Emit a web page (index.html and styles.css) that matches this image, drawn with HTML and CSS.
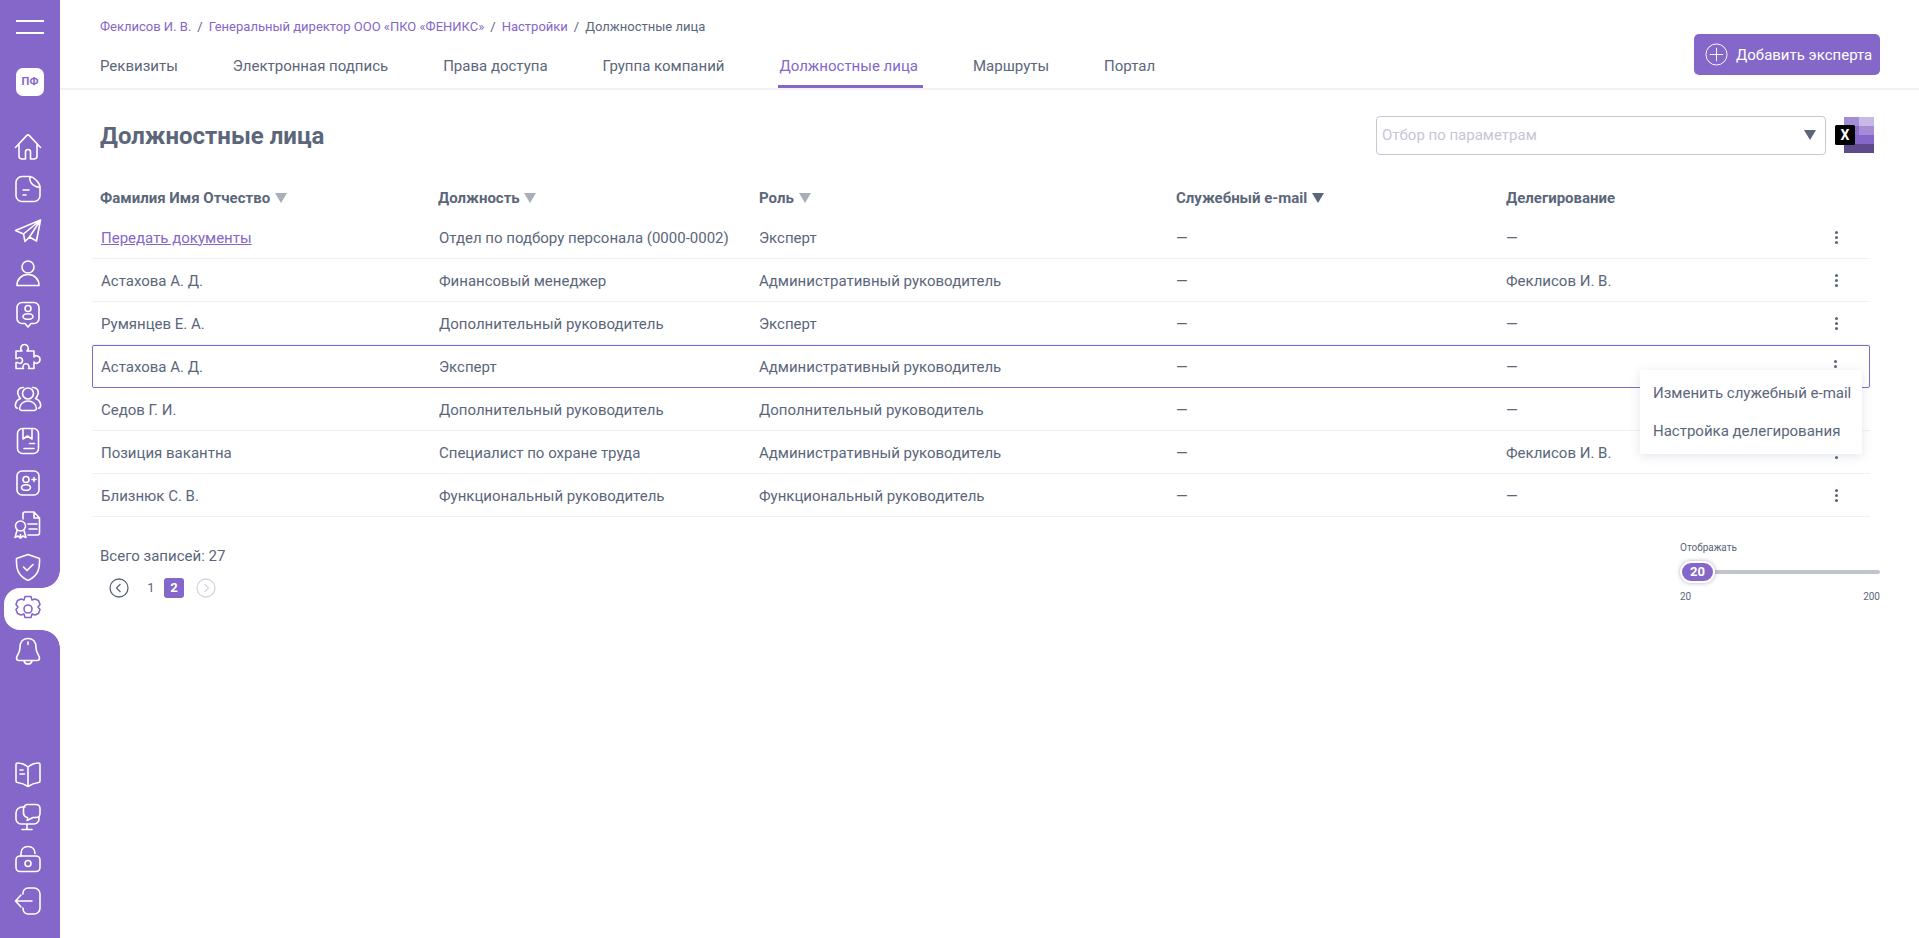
FILE: index.html
```html
<!DOCTYPE html>
<html lang="ru">
<head>
    <meta charset="UTF-8">
    <title>Должностные лица</title>
    <link rel="stylesheet" href="styles.css">
</head>
<body>
    <aside class="sidebar">
        <div class="burger"><span></span><span></span></div>
        <div class="logo">ПФ</div>
        <nav class="nav">
            <a class="nav-item"><svg viewBox="0 0 28 28"><path d="M1.500 14.500 12.600 2.600a2 2 0 0 1 2.800 0L26.500 14.500M5 11.500V23a3 3 0 0 0 3 3h3.500v-7a2.500 2.500 0 0 1 5 0v7H20a3 3 0 0 0 3-3V11.500"/></svg></a>
            <a class="nav-item"><svg viewBox="0 0 28 28"><path d="M16 1.500H8a6 6 0 0 0-6 6v13a6 6 0 0 0 6 6h12a6 6 0 0 0 6-6v-8.500C26 8 20 2 16 1.500c-1 4 1 9.500 10 11M9 15h6M9 20h3"/></svg></a>
            <a class="nav-item"><svg viewBox="0 0 28 28"><path d="M26.500 3 1.500 13.500l8 3.500L26.500 3l-4 21-7-4-4.500 4.500-1.500-7.500M15.500 20 26.500 3"/></svg></a>
            <a class="nav-item"><svg viewBox="0 0 28 28"><circle cx="14" cy="8" r="6"/><path d="M3 26.500c0-6.500 4.500-11 11-11s11 4.500 11 11z"/></svg></a>
            <a class="nav-item"><svg viewBox="0 0 28 28"><path d="M8 1.500h12a5 5 0 0 1 5 5v11a5 5 0 0 1-5 5h-3l-3 3.500-3-3.500H8a5 5 0 0 1-5-5v-11a5 5 0 0 1 5-5z"/><circle cx="14" cy="7.500" r="3"/><ellipse cx="14" cy="15.500" rx="5" ry="2.800"/></svg></a>
            <a class="nav-item"><svg viewBox="0 0 28 28"><path d="M2 8h6c-1.500-1-1.500-2.500-1-4 .5-1.500 2-2.500 3.500-2.500s3 1 3.500 2.500c.5 1.500.5 3-1 4h7v6c1-1.500 2.500-1.500 3.500-1 1.500.5 2.500 2 2.500 3.500s-1 3-2.500 3.500c-1 .5-2.500.5-3.500-1v6.500h-5.500c1-1 .8-2 .3-3-.5-1-1.600-1.700-2.800-1.700s-2.300.7-2.800 1.700c-.5 1-.7 2 .3 3H2v-6h1.500c1.200 1 2.600 1.200 3.700.5 1-.6 1.300-1.600 1.300-2.500s-.3-1.900-1.300-2.500c-1.100-.7-2.500-.5-3.700.5H2z"/></svg></a>
            <a class="nav-item"><svg viewBox="0 0 28 28"><circle cx="14" cy="8.500" r="5.500"/><path d="M8 25.500c-1.500 0-2.500-1-2.300-2.500.4-4 3.800-7 8.300-7s7.900 3 8.300 7c.2 1.500-.8 2.500-2.300 2.500zM9.500 2.500C5.500 2 3 5.500 4 9c.5 2 1.500 3.500 2.500 4.500C3 15 1 18 1.500 21.500c.2 1 1 1.800 2 1.800M18.500 2.500c4-.5 6.500 3 5.500 6.500-.5 2-1.500 3.500-2.500 4.500 3.500 1.500 5.500 4.500 5 8-.2 1-1 1.800-2 1.800"/></svg></a>
            <a class="nav-item"><svg viewBox="0 0 28 28"><rect x="3.500" y="1.500" width="21" height="25" rx="5"/><path d="M9 2v10l4.500-3 4.500 3V2M15.500 16.500h5M10 21.500h10"/></svg></a>
            <a class="nav-item"><svg viewBox="0 0 28 28"><rect x="3" y="2" width="22" height="24" rx="5"/><circle cx="12" cy="10.500" r="3"/><ellipse cx="12" cy="18.500" rx="4.500" ry="2.800"/><path d="M18 10.500h4M20 8.500v4"/></svg></a>
            <a class="nav-item"><svg viewBox="0 0 28 28"><path d="M9 8V3a2 2 0 0 1 2-2h9l5.500 6v15a2 2 0 0 1-2 2H14M20 1.500v5.500h5.500M14 13h9M15 18h8"/><circle cx="6.500" cy="15" r="5"/><path d="m3 19.500-2 7 3-1.500 2 2 .5-3.500.5 3.500 2-2 3 1.500-2-7"/></svg></a>
            <a class="nav-item"><svg viewBox="0 0 28 28"><path d="M14 1.500 2.500 5.500c-.5 10 1 17 11.500 22 10.500-5 12-12 11.500-22zM9.500 14l3.500 3.500 6-6"/></svg></a>
            <a class="nav-item active"><svg viewBox="0 0 28 28"><circle cx="14" cy="14" r="4"/><path d="M11 1.500h6l1 3.500 3-1 3.500 1.500 1.500 4-2 2.500 2 2.500-1.500 4-3.500 1.500-3-1-1 3.500h-6l-1-3.500-3 1-3.500-1.500-1.500-4 2-2.500-2-2.500 1.500-4L7 4l3 1z"/></svg></a>
            <a class="nav-item"><svg viewBox="0 0 28 28"><path d="M14 1.500c-5.500 0-8 4-8 9 0 6-3.500 8-3.500 10.500 0 1.500 1 2.500 2.500 2.500h18c1.500 0 2.500-1 2.500-2.500 0-2.500-3.500-4.500-3.500-10.500 0-5-2.500-9-8-9zM10 24c.5 2 2 3 4 3s3.500-1 4-3M14 5v2.500"/></svg></a>
        </nav>
        <nav class="nav-bottom">
            <a class="nav-item"><svg viewBox="0 0 28 28"><path d="M14 6C11 3.500 7 2 3.500 2 2.500 2 2 2.500 2 3.500V20c0 1 .5 1.500 1.500 1.500 3.500.5 7.500 2 10.500 4 3-2 7-3.500 10.500-4 1 0 1.500-.5 1.500-1.500V3.500C26 2.500 25.500 2 24.500 2 21 2 17 3.500 14 6zM14 6v19.500M6 9h3M6 13h4.500"/></svg></a>
            <a class="nav-item"><svg viewBox="0 0 28 28"><path d="M11 4H8a6 6 0 0 0-6 6v6a5 5 0 0 0 5 5h13a5 5 0 0 0 5-5v-2M13 21v5M8 26.500h10"/><path d="M14 1.500h8a4 4 0 0 1 4 4v5a4 4 0 0 1-4 4h-3l-6 3c1-1 .5-2 .5-3a5 5 0 0 1-4-4V5.500a4 4 0 0 1 4.500-4z"/></svg></a>
            <a class="nav-item"><svg viewBox="0 0 28 28"><rect x="2" y="11" width="24" height="15.500" rx="4"/><circle cx="14" cy="18.500" r="3"/><path d="M7 11V8.500C7 4 10 1.500 14 1.500s7 2.500 7 7"/></svg></a>
            <a class="nav-item"><svg viewBox="0 0 28 28"><path d="M9 7V6a5 5 0 0 1 5-5h6a6 6 0 0 1 6 6v14a6 6 0 0 1-6 6h-6a5 5 0 0 1-5-5v-1M18 14H1.500M7 8l-5.500 6L7 20"/></svg></a>
        </nav>
    </aside>

    <main class="main">
        <header class="topbar">
            <div class="topbar-left">
                <div class="crumbs">
                    <a>Феклисов И. В.</a><span>/</span><a>Генеральный директор ООО «ПКО «ФЕНИКС»</a><span>/</span><a>Настройки</a><span>/</span><b>Должностные лица</b>
                </div>
                <div class="tabs">
                    <a class="tab">Реквизиты</a>
                    <a class="tab">Электронная подпись</a>
                    <a class="tab">Права доступа</a>
                    <a class="tab">Группа компаний</a>
                    <a class="tab active">Должностные лица</a>
                    <a class="tab">Маршруты</a>
                    <a class="tab">Портал</a>
                </div>
            </div>
            <button class="add-button">
                <svg viewBox="0 0 24 24"><circle cx="12" cy="12" r="11"/><path d="M12 5v14M5 12h14"/></svg>
                Добавить эксперта
            </button>
        </header>

        <section class="content">
            <div class="title-row">
                <h1>Должностные лица</h1>
                <div class="filter">
                    <span>Отбор по параметрам</span>
                    <i class="arrow"></i>
                </div>
                <svg class="excel" viewBox="0 0 39 37">
                    <rect x="9" y="0" width="15" height="9" fill="#a58cd6"/>
                    <rect x="24" y="0" width="15" height="9" fill="#c8b9e6"/>
                    <rect x="9" y="9" width="15" height="9" fill="#8a6fca"/>
                    <rect x="24" y="9" width="15" height="9" fill="#a58cd6"/>
                    <rect x="9" y="18" width="30" height="9" fill="#8467c8"/>
                    <rect x="9" y="27" width="30" height="9" fill="#5f4a8e"/>
                    <rect x="0" y="8" width="20" height="20" rx="1.500" fill="#000"/>
                    <text x="10" y="23" text-anchor="middle" class="excel-x">X</text>
                </svg>
            </div>

            <div class="table">
                <div class="row head">
                    <div>Фамилия Имя Отчество <i class="sort"></i></div>
                    <div>Должность <i class="sort"></i></div>
                    <div>Роль <i class="sort"></i></div>
                    <div>Служебный e-mail <i class="sort on"></i></div>
                    <div>Делегирование</div>
                    <div></div>
                </div>
                <div class="row">
                    <div><a class="link">Передать документы</a></div>
                    <div>Отдел по подбору персонала (0000-0002)</div>
                    <div>Эксперт</div>
                    <div>—</div>
                    <div>—</div>
                    <div class="kebab"><i></i></div>
                </div>
                <div class="row">
                    <div>Астахова А. Д.</div>
                    <div>Финансовый менеджер</div>
                    <div>Административный руководитель</div>
                    <div>—</div>
                    <div>Феклисов И. В.</div>
                    <div class="kebab"><i></i></div>
                </div>
                <div class="row">
                    <div>Румянцев Е. А.</div>
                    <div>Дополнительный руководитель</div>
                    <div>Эксперт</div>
                    <div>—</div>
                    <div>—</div>
                    <div class="kebab"><i></i></div>
                </div>
                <div class="row selected">
                    <div>Астахова А. Д.</div>
                    <div>Эксперт</div>
                    <div>Административный руководитель</div>
                    <div>—</div>
                    <div>—</div>
                    <div class="kebab"><i></i></div>
                    <ul class="menu">
                        <li>Изменить служебный e-mail</li>
                        <li>Настройка делегирования</li>
                    </ul>
                </div>
                <div class="row">
                    <div>Седов Г. И.</div>
                    <div>Дополнительный руководитель</div>
                    <div>Дополнительный руководитель</div>
                    <div>—</div>
                    <div>—</div>
                    <div class="kebab"><i></i></div>
                </div>
                <div class="row">
                    <div>Позиция вакантна</div>
                    <div>Специалист по охране труда</div>
                    <div>Административный руководитель</div>
                    <div>—</div>
                    <div>Феклисов И. В.</div>
                    <div class="kebab"><i></i></div>
                </div>
                <div class="row">
                    <div>Близнюк С. В.</div>
                    <div>Функциональный руководитель</div>
                    <div>Функциональный руководитель</div>
                    <div>—</div>
                    <div>—</div>
                    <div class="kebab"><i></i></div>
                </div>
            </div>

            <div class="footer">
                <div class="paging">
                    <div class="total">Всего записей: 27</div>
                    <div class="pager">
                        <svg class="pg" viewBox="0 0 20 20"><circle cx="10" cy="10" r="9"/><path d="M11.500 6 7.500 10l4 4"/></svg>
                        <span class="page">1</span>
                        <span class="page current">2</span>
                        <svg class="pg off" viewBox="0 0 20 20"><circle cx="10" cy="10" r="9"/><path d="M8.500 6l4 4-4 4"/></svg>
                    </div>
                </div>
                <div class="slider">
                    <div class="slider-label">Отображать</div>
                    <div class="track"><span class="thumb">20</span></div>
                    <div class="slider-range"><span>20</span><span>200</span></div>
                </div>
            </div>
        </section>
    </main>
</body>
</html>
```
FILE: styles.css
```css
* {
    box-sizing: border-box;
}
body {
    margin: 0;
    height: 938px;
    display: flex;
    font-family: Roboto, "Noto Sans", sans-serif;
    font-size: 15px;
    color: #5b667b;
    background: #fff;
    overflow: hidden;
}
a {
    color: inherit;
    text-decoration: none;
}

/* sidebar */
.sidebar {
    width: 60px;
    flex-shrink: 0;
    background: #8467c8;
    display: flex;
    flex-direction: column;
}
.burger {
    width: 28px;
    margin: 20px 0 0 16px;
}
.burger span {
    display: block;
    height: 2px;
    margin-bottom: 10px;
    background: #fff;
}
.logo {
    width: 28px;
    height: 28px;
    margin: 24px 0 0 16px;
    border-radius: 7px;
    background: #fff;
    color: #8467c8;
    font-size: 11px;
    font-weight: 700;
    line-height: 28px;
    text-align: center;
}
.nav {
    margin-top: 30px;
    flex: 1;
}
.nav-bottom {
    padding-bottom: 16px;
}
.nav-item {
    display: flex;
    align-items: center;
    justify-content: center;
    height: 42px;
    padding-right: 4px;
    position: relative;
}
.nav-item svg {
    width: 28px;
    height: 28px;
    fill: none;
    stroke: #fff;
    stroke-width: 1.600;
    stroke-linecap: round;
    stroke-linejoin: round;
}
.nav-item.active {
    margin-left: 4px;
    padding-right: 8px;
    background: #fff;
    border-radius: 16px 0 0 16px;
}
.nav-item.active svg {
    stroke: #8467c8;
}
.nav-item.active::before,
.nav-item.active::after {
    content: "";
    position: absolute;
    right: 0;
    width: 18px;
    height: 18px;
    background: radial-gradient(circle at 0 0, #8467c8 17.500px, #fff 18px);
}
.nav-item.active::before {
    top: -18px;
}
.nav-item.active::after {
    bottom: -18px;
    background: radial-gradient(circle at 0 100%, #8467c8 17.500px, #fff 18px);
}

/* top */
.main {
    flex: 1;
    min-width: 0;
}
.topbar {
    height: 90px;
    padding: 0 39px 0 40px;
    border-bottom: 2px solid #f1f1f6;
    display: flex;
    justify-content: space-between;
}
.crumbs {
    padding-top: 19px;
    height: 56px;
    font-size: 13px;
    line-height: 15px;
    color: #8467c8;
}
.crumbs span {
    margin: 0 6px;
    color: #5b667b;
}
.crumbs b {
    font-weight: 400;
    color: #5b667b;
}
.tabs {
    display: flex;
    gap: 55px;
}
.tab {
    height: 32px;
    line-height: 20px;
}
.tab.active {
    margin: 0 -5px 0 -1px;
    padding: 0 5px 0 1px;
    color: #8467c8;
    border-bottom: 3px solid #8467c8;
}
.add-button {
    width: 186px;
    height: 41px;
    margin-top: 34px;
    padding: 0 0 0 11px;
    border: none;
    border-radius: 5px;
    background: #8467c8;
    color: #fff;
    font: 15px Roboto, sans-serif;
    display: flex;
    align-items: center;
    gap: 8px;
}
.add-button svg {
    width: 23px;
    height: 23px;
    fill: none;
    stroke: #fff;
    stroke-width: 1;
}

/* title + filter */
.content {
    padding: 0 49px 0 32px;
}
.title-row {
    display: flex;
    align-items: center;
    height: 80px;
    padding-left: 8px;
    padding-top: 10px;
}
h1 {
    margin: 0 auto 0 0;
    padding-top: 2px;
    font-size: 24px;
    font-weight: 700;
}
.filter {
    width: 450px;
    height: 39px;
    padding: 0 5px;
    border: 1px solid #c6c9d3;
    border-radius: 4px;
    display: flex;
    align-items: center;
    justify-content: space-between;
    color: #c6c6d6;
}
.arrow {
    width: 0;
    height: 0;
    margin-right: 4px;
    border-left: 6px solid transparent;
    border-right: 6px solid transparent;
    border-top: 10px solid #5b667b;
}
.excel {
    width: 39px;
    height: 37px;
    margin: 0 -4px 0 9px;
}
.excel-x {
    fill: #fff;
    font-size: 14px;
    font-weight: 700;
}

/* table */
.table {
    margin-top: 8px;
}
.row {
    display: grid;
    grid-template-columns: 338px 321px 417px 330px 1fr 68px;
    align-items: center;
    height: 43px;
    padding: 1px 0 0 8px;
    border-bottom: 1px solid #f0f1f4;
    position: relative;
}
.row > div:nth-child(-n+2) {
    padding-left: 1px;
}
.row.head {
    font-weight: 700;
    border-bottom: none;
    height: 38px;
    padding-top: 2px;
}
.row.head > div:nth-child(-n+2) {
    padding-left: 0;
}
.row.selected {
    padding: 0 0 0 7px;
    border: 1px solid #8467c8;
    border-radius: 2px;
}
.link {
    color: #8467c8;
    text-decoration: underline;
}
.sort {
    display: inline-block;
    width: 0;
    height: 0;
    margin-left: 1px;
    border-left: 6px solid transparent;
    border-right: 6px solid transparent;
    border-top: 10px solid #a9aeb9;
}
.sort.on {
    border-top-color: #5b667b;
}
.kebab {
    display: flex;
    justify-content: center;
}
.kebab i {
    width: 3px;
    height: 3px;
    border-radius: 50%;
    background: #5b667b;
    box-shadow: 0 -5px 0 #5b667b, 0 5px 0 #5b667b;
}
.menu {
    position: absolute;
    z-index: 2;
    top: 24px;
    right: 7px;
    width: 222px;
    height: 84px;
    margin: 0;
    padding: 4px 13px;
    list-style: none;
    background: #fff;
    box-shadow: 0 2px 10px rgba(90, 100, 130, 0.16);
}
.menu li {
    height: 38px;
    line-height: 38px;
    white-space: nowrap;
}

/* footer */
.footer {
    display: flex;
    justify-content: space-between;
    padding: 29px 0 0 8px;
}
.total {
    line-height: 20px;
}
.pager {
    display: flex;
    align-items: center;
    height: 20px;
    margin-top: 12px;
    padding-left: 9px;
}
.pg {
    width: 20px;
    height: 20px;
    fill: none;
    stroke: #5b667b;
    stroke-width: 1.300;
}
.pg.off {
    stroke: #d3d6dd;
}
.page {
    width: 20px;
    height: 20px;
    margin-left: 12px;
    line-height: 20px;
    text-align: center;
    font-size: 13px;
}
.page.current {
    margin-left: 3px;
    margin-right: 12px;
    border-radius: 3px;
    background: #8467c8;
    color: #fff;
    font-weight: 700;
}
.slider {
    width: 200px;
    margin-right: -10px;
    font-size: 10px;
}
.slider-label {
    margin-top: -4px;
    line-height: 12px;
}
.track {
    display: flex;
    align-items: center;
    height: 4px;
    margin-top: 16px;
    border-radius: 2px;
    background: #c0c4cc;
}
.thumb {
    width: 35px;
    height: 22px;
    flex-shrink: 0;
    border: 2px solid #fff;
    border-radius: 11px;
    background: #8467c8;
    color: #fff;
    font-size: 13px;
    font-weight: 700;
    line-height: 18px;
    text-align: center;
    box-shadow: 0 0 4px rgba(90, 70, 150, 0.45);
}
.slider-range {
    display: flex;
    justify-content: space-between;
    margin-top: 17px;
    line-height: 12px;
}
```
